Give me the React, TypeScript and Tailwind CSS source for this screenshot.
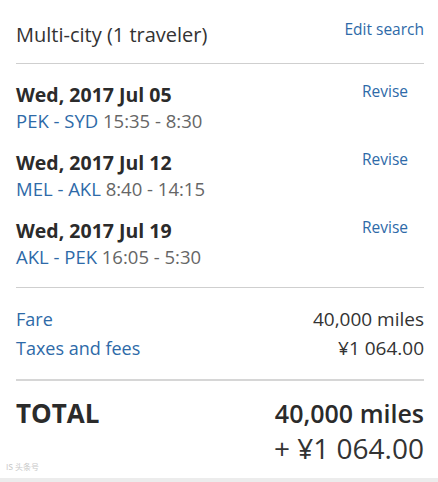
import React from 'react';

type Leg = { date: string; route: string; times: string };

const legs: Leg[] = [
    { date: 'Wed, 2017 Jul 05', route: 'PEK - SYD', times: '15:35 - 8:30' },
    { date: 'Wed, 2017 Jul 12', route: 'MEL - AKL', times: '8:40 - 14:15' },
    { date: 'Wed, 2017 Jul 19', route: 'AKL - PEK', times: '16:05 - 5:30' },
];

const App: React.FC = () => {
    return (
        <div
            className="relative w-[438px] h-[482px] bg-white flex flex-col overflow-hidden text-[#333]"
            style={{ fontFamily: '"Open Sans", "Noto Sans", sans-serif' }}
        >
            <div className="pl-4 pr-[14px] flex-1">
                {/* Header */}
                <header className="flex justify-between items-start pt-[22px] pb-[15px] border-b border-[#cfcfcf]">
                    <h1 className="text-[20px] leading-[26px] text-[#333]">Multi-city (1 traveler)</h1>
                    <button className="text-[15.5px] leading-[16px] text-[#2e6aa8] mt-[-1px]">Edit search</button>
                </header>

                {/* Legs */}
                <ul className="pt-[18px] pb-[17px] flex flex-col gap-[16px] border-b border-[#cfcfcf]">
                    {legs.map(leg => (
                        <li key={leg.date} className="flex justify-between items-start">
                            <div>
                                <p className="text-[19.5px] leading-[26px] font-bold text-[#2b2b2b]">{leg.date}</p>
                                <p className="text-[18.5px] leading-[26px]">
                                    <span className="text-[#2e6aa8]">{leg.route}</span>{' '}
                                    <span className="text-[#666]">{leg.times}</span>
                                </p>
                            </div>
                            <button className="text-[15.5px] leading-[16px] text-[#2e6aa8] mr-[16px] mt-[1px]">Revise</button>
                        </li>
                    ))}
                </ul>

                {/* Fare breakdown */}
                <div className="pt-[17px] pb-[16px] border-b-2 border-[#d6d6d6] leading-[29px]">
                    <div className="flex justify-between">
                        <span className="text-[18px] text-[#2e6aa8]">Fare</span>
                        <span className="text-[19px] text-[#333]">40,000 miles</span>
                    </div>
                    <div className="flex justify-between">
                        <span className="text-[18px] text-[#2e6aa8]">Taxes and fees</span>
                        <span className="text-[19px] text-[#333]">¥1 064.00</span>
                    </div>
                </div>

                {/* Total */}
                <div className="pt-[15px] flex justify-between items-start">
                    <span className="text-[26px] leading-[34px] font-bold text-[#2b2b2b]">TOTAL</span>
                    <div className="text-right">
                        <p className="text-[25px] leading-[34px] font-semibold text-[#2b2b2b]">40,000 miles</p>
                        <p className="text-[28px] leading-[36px] text-[#333]">+ ¥1 064.00</p>
                    </div>
                </div>
            </div>

            <div className="h-[4px] bg-[#ececec]" />

            {/* watermark */}
            <span
                className="absolute left-[6px] bottom-[10px] text-[8px] leading-[10px] text-[#c8c8c8]"
                style={{ fontFamily: '"Noto Sans CJK SC", sans-serif' }}
            >
                IS 头条号
            </span>
        </div>
    );
};

export default App;
